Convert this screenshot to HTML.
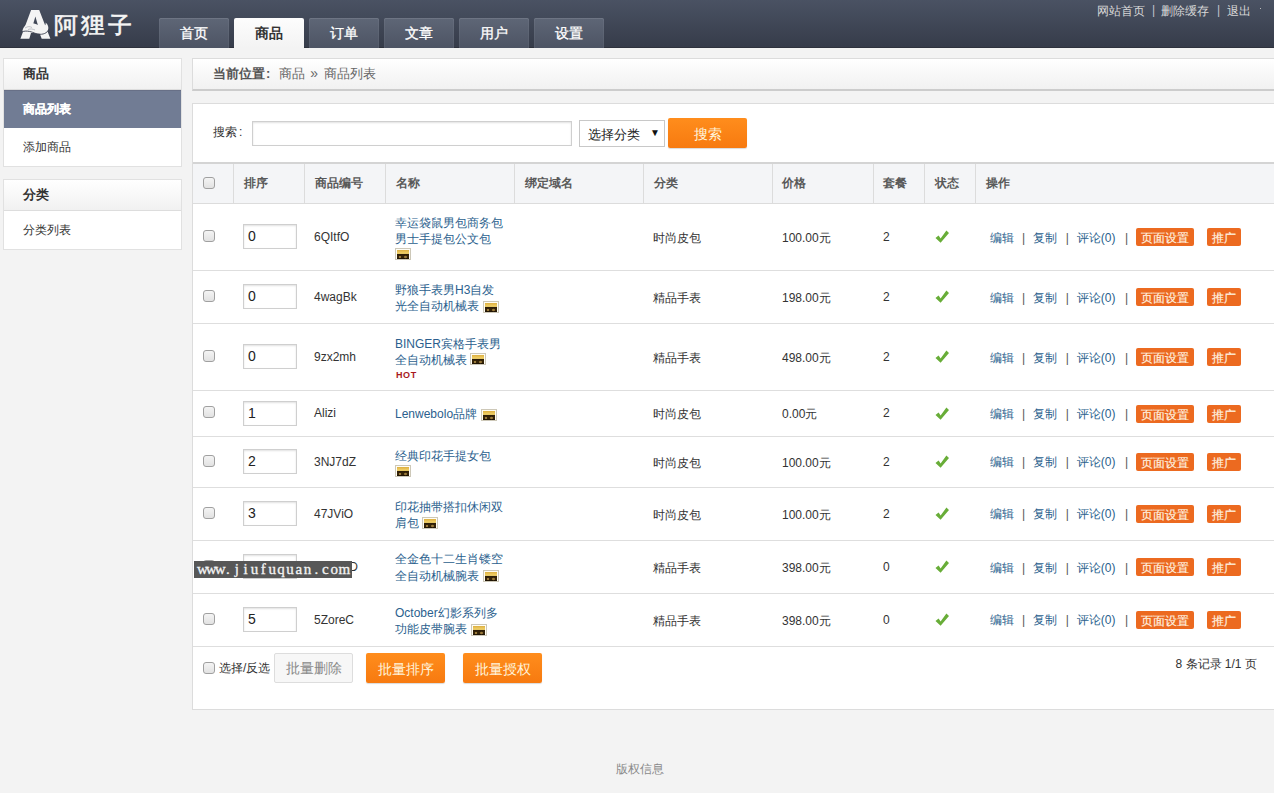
<!DOCTYPE html>
<html><head><meta charset="utf-8"><style>
*{box-sizing:border-box}
html,body{margin:0;padding:0}
body{width:1274px;height:793px;overflow:hidden;position:relative;background:#f3f3f3;font-family:"Liberation Sans",sans-serif;font-size:12px;color:#333}
.a{position:absolute;white-space:nowrap}
#hd{left:0;top:0;width:1274px;height:48px;background:linear-gradient(#4a5263,#363c4a);border-bottom:1px solid #2e323d}
.tab{position:absolute;top:18px;width:70px;height:30px;background:linear-gradient(#5e6676,#4d5464);color:#fff;font-size:14px;text-align:center;line-height:31px;-webkit-text-stroke:0.3px #fff;border-radius:2px 2px 0 0;box-shadow:inset 0 1px 0 rgba(255,255,255,.10),inset 1px 0 0 rgba(255,255,255,.05),inset -1px 0 0 rgba(255,255,255,.05)}
.tab.on{background:linear-gradient(#fdfdfd,#f3f3f3);color:#333;-webkit-text-stroke:0;font-weight:bold;height:30px;box-shadow:none}
.toplink{top:3px;color:#d8d8d8;font-size:12px;line-height:16px}
.side{position:absolute;left:3px;width:179px;background:#fff;border:1px solid #e1e1e1}
.side .h{height:31px;line-height:30px;padding-left:19px;font-weight:bold;font-size:13px;color:#333;background:linear-gradient(#fff,#f1f1f1);border-bottom:1px solid #ddd}
.side .i{height:38px;line-height:38px;padding-left:19px;font-size:12px;color:#333}
.side .i.on{background:#717c94;color:#fff;font-weight:bold;-webkit-text-stroke:0.2px #fff;box-shadow:inset 0 1px 0 #687087}
#crumb{left:192px;top:58px;width:1090px;height:33px;background:linear-gradient(#fff,#f1f1f1);border:1px solid #dcdcdc;border-bottom:2px solid #cccccc;font-size:13px;line-height:29px;padding-left:20px;color:#666}
#crumb b{color:#555}
#main{left:192px;top:103px;width:1090px;height:607px;background:#fff;border:1px solid #dcdcdc}
.inp{position:absolute;background:#fff;border:1px solid #cfcfcf;box-shadow:inset 0 1px 2px rgba(0,0,0,.12)}
.obtn{position:absolute;background:linear-gradient(#ff8d1c,#f77a10);color:#fff4dc;border-radius:2px;text-align:center;font-size:14px;box-shadow:0 1px 1px rgba(0,0,0,.15);padding-top:1px}
.cb{position:absolute;width:12px;height:12px;border:1px solid #a0a0a0;border-radius:3px;background:linear-gradient(#f4f4f4,#e2e2e2)}
#th{left:193px;top:162px;width:1090px;height:42px;background:#f4f5f7;border-top:2px solid #d4d4d4;border-bottom:1px solid #dcdcdc}
.thc{position:absolute;top:0;height:39px;line-height:39px;font-weight:bold;font-size:12px;color:#595959}
.sep{position:absolute;top:0;width:1px;height:39px;background:#dcdcdc}
.rowline{position:absolute;left:193px;width:1090px;height:1px;background:#dedede}
.t{position:absolute;white-space:nowrap;font-size:12px;color:#333;line-height:16px}
.lk{color:#2f6496}
.nm{position:absolute;left:395px;font-size:12px;line-height:16px;color:#2b5f8e;white-space:nowrap}
.vip{position:absolute;width:16px;height:12px;border:1px solid #cdc8b8;background:#fffdf5}
.vip b{position:absolute;left:1px;top:1px;width:12px;height:9px;background:radial-gradient(circle at 3px 7px,#9a7a3a 0,#9a7a3a 1px,transparent 1.6px),radial-gradient(circle at 8.5px 7px,#9a7a3a 0,#9a7a3a 1px,transparent 1.6px),linear-gradient(#dcae40 0,#f4d46a 38%,#2c1c06 50%,#3a2708 80%,#160d02 100%)}
.hot{position:absolute;font-family:"Liberation Sans",sans-serif;font-weight:bold;font-size:9px;color:#a8191c;letter-spacing:0.6px;line-height:10px}
.ops{position:absolute;left:990px;font-size:12px;line-height:16px;color:#2b5f8e;white-space:nowrap}
.ops .p{color:#555;display:inline-block}
.rb{position:absolute;background:#ec6a20;color:#fff3e0;font-size:12px;text-align:center;line-height:20px;height:18px;border-radius:2px;-webkit-text-stroke:0.15px #fff3e0}
.chk{position:absolute;left:935px;width:14px;height:14px}
</style></head><body>
<div id="hd" class="a"></div>
<svg class="a" style="left:17px;top:6px" width="38" height="36" viewBox="0 0 38 36">
<path d="M14.1 3.9 L22.2 3.9 L33.4 32.7 L24.7 32.7 L22.5 27 L14 27 L12.3 32.7 L3.4 32.7 Z M18.4 10.4 L16 18.5 L21 19.5 Z" fill="#f4f4f4" fill-rule="evenodd"/>
<path d="M5.5 24.5 C7 19 12 16.5 17 17.5 C21 18.5 24 21 27 20 C28.5 19.5 29 18 28.5 16.5 C31 18 32 21.5 31 24 C29.5 27.5 24 28.5 19 27.5 C14 26.5 9 24 5.5 26 Z" fill="#f4f4f4"/>
<path d="M5 25.8 C10 24 15 26 19 27.6 C24 29.2 29 28 31.2 24.5" stroke="#3e4352" stroke-width="0.9" fill="none"/>
<path d="M8 22 C11 20 13 20.5 15 21.5 M11 23.5 C13.5 22.5 16 23 18 24" stroke="#9a9ea8" stroke-width="0.6" fill="none"/>
</svg>
<div class="a" style="left:54px;top:9px;font-size:23px;line-height:32px;color:#f5f5f5;-webkit-text-stroke:0.6px #f5f5f5;letter-spacing:3px;transform:scaleX(1.04);transform-origin:0 0">阿狸子</div>
<div class="tab" style="left:159px">首页</div>
<div class="tab on" style="left:234px">商品</div>
<div class="tab" style="left:309px">订单</div>
<div class="tab" style="left:384px">文章</div>
<div class="tab" style="left:459px">用户</div>
<div class="tab" style="left:534px">设置</div>
<div class="a toplink" style="left:1097px">网站首页</div>
<div class="a toplink" style="left:1152px;top:2px;color:#c0c4cc">|</div>
<div class="a toplink" style="left:1161px">删除缓存</div>
<div class="a toplink" style="left:1217px;top:2px;color:#c0c4cc">|</div>
<div class="a toplink" style="left:1227px">退出</div>
<div class="a" style="left:1260px;top:8px;width:1px;height:1px;background:#bbb"></div>
<div class="side" style="top:58px;height:109px"><div class="h">商品</div><div class="i on">商品列表</div><div class="i">添加商品</div></div>
<div class="side" style="top:179px;height:71px"><div class="h">分类</div><div class="i">分类列表</div></div>
<div id="crumb" class="a"><b>当前位置<span style="font-family:'Liberation Sans';margin:0 8.3px 0 1px">:</span></b>商品<span style="margin:0 6.4px 0 5.6px;font-size:14px">&raquo;</span>商品列表</div>
<div id="main" class="a"></div>
<div class="a" style="left:213px;top:124px;font-size:12px;line-height:16px;color:#333">搜索<span style="margin-left:2px">:</span></div>
<div class="inp" style="left:252px;top:121px;width:320px;height:25px"></div>
<div class="inp" style="left:579px;top:120px;width:86px;height:27px;box-shadow:none;border-color:#c8c8c8"></div>
<div class="a" style="left:588px;top:126px;font-size:13px;line-height:17px;color:#222">选择分类</div>
<div class="a" style="left:650px;top:126px;font-size:10px;line-height:14px;color:#111">▼</div>
<div class="obtn" style="left:668px;top:118px;width:79px;height:30px;line-height:30px">搜索</div>
<div id="th" class="a">
<div class="sep" style="left:40px"></div>
<div class="sep" style="left:111px"></div>
<div class="sep" style="left:192px"></div>
<div class="sep" style="left:321px"></div>
<div class="sep" style="left:450px"></div>
<div class="sep" style="left:579px"></div>
<div class="sep" style="left:680px"></div>
<div class="sep" style="left:731px"></div>
<div class="sep" style="left:782px"></div>
</div>
<div class="cb" style="left:203px;top:177px"></div>
<div class="thc a" style="left:244px;top:164px">排序</div>
<div class="thc a" style="left:315px;top:164px">商品编号</div>
<div class="thc a" style="left:396px;top:164px">名称</div>
<div class="thc a" style="left:525px;top:164px">绑定域名</div>
<div class="thc a" style="left:654px;top:164px">分类</div>
<div class="thc a" style="left:782px;top:164px">价格</div>
<div class="thc a" style="left:883px;top:164px">套餐</div>
<div class="thc a" style="left:935px;top:164px">状态</div>
<div class="thc a" style="left:986px;top:164px">操作</div>
<div class="rowline" style="top:270px"></div>
<div class="cb" style="left:203px;top:230px"></div>
<div class="inp" style="left:243px;top:224px;width:54px;height:25px;font-size:14px;line-height:23px;padding-left:4px;color:#222">0</div>
<div class="t" style="left:314px;top:229px">6QItfO</div>
<div class="nm" style="top:215px">幸运袋鼠男包商务包</div>
<div class="nm" style="top:231px">男士手提包公文包</div>
<i class="vip" style="left:395px;top:248px"><b></b></i>
<div class="t" style="left:653px;top:230px">时尚皮包</div>
<div class="t" style="left:782px;top:230px">100.00元</div>
<div class="t" style="left:883px;top:229px">2</div>
<svg class="chk" style="top:230px" viewBox="0 0 14 14"><path d="M0.5 8 L3.6 5.6 L5.6 8.6 L11.4 0.6 L14 3 L5.6 12.8 Z" fill="#68ad38"/></svg>
<div class="ops" style="top:230px">编辑<span class="p" style="margin:0 7.5px 0 8px">|</span>复制<span class="p" style="margin:0 8px 0 9px">|</span>评论(0)<span class="p" style="margin:0 0 0 9.5px">|</span></div>
<div class="rb" style="left:1136px;top:228px;width:58px">页面设置</div>
<div class="rb" style="left:1207px;top:228px;width:34px">推广</div>
<div class="rowline" style="top:323px"></div>
<div class="cb" style="left:203px;top:290px"></div>
<div class="inp" style="left:243px;top:284px;width:54px;height:25px;font-size:14px;line-height:23px;padding-left:4px;color:#222">0</div>
<div class="t" style="left:314px;top:289px">4wagBk</div>
<div class="nm" style="top:282px">野狼手表男H3自发</div>
<div class="nm" style="top:298px">光全自动机械表</div>
<i class="vip" style="left:483px;top:301px"><b></b></i>
<div class="t" style="left:653px;top:290px">精品手表</div>
<div class="t" style="left:782px;top:290px">198.00元</div>
<div class="t" style="left:883px;top:289px">2</div>
<svg class="chk" style="top:290px" viewBox="0 0 14 14"><path d="M0.5 8 L3.6 5.6 L5.6 8.6 L11.4 0.6 L14 3 L5.6 12.8 Z" fill="#68ad38"/></svg>
<div class="ops" style="top:290px">编辑<span class="p" style="margin:0 7.5px 0 8px">|</span>复制<span class="p" style="margin:0 8px 0 9px">|</span>评论(0)<span class="p" style="margin:0 0 0 9.5px">|</span></div>
<div class="rb" style="left:1136px;top:288px;width:58px">页面设置</div>
<div class="rb" style="left:1207px;top:288px;width:34px">推广</div>
<div class="rowline" style="top:390px"></div>
<div class="cb" style="left:203px;top:350px"></div>
<div class="inp" style="left:243px;top:344px;width:54px;height:25px;font-size:14px;line-height:23px;padding-left:4px;color:#222">0</div>
<div class="t" style="left:314px;top:349px">9zx2mh</div>
<div class="nm" style="top:335.5px">BINGER宾格手表男</div>
<div class="nm" style="top:351.5px">全自动机械表</div>
<i class="vip" style="left:470px;top:353px"><b></b></i>
<div class="hot" style="left:396px;top:370px">HOT</div>
<div class="t" style="left:653px;top:350px">精品手表</div>
<div class="t" style="left:782px;top:350px">498.00元</div>
<div class="t" style="left:883px;top:349px">2</div>
<svg class="chk" style="top:350px" viewBox="0 0 14 14"><path d="M0.5 8 L3.6 5.6 L5.6 8.6 L11.4 0.6 L14 3 L5.6 12.8 Z" fill="#68ad38"/></svg>
<div class="ops" style="top:350px">编辑<span class="p" style="margin:0 7.5px 0 8px">|</span>复制<span class="p" style="margin:0 8px 0 9px">|</span>评论(0)<span class="p" style="margin:0 0 0 9.5px">|</span></div>
<div class="rb" style="left:1136px;top:348px;width:58px">页面设置</div>
<div class="rb" style="left:1207px;top:348px;width:34px">推广</div>
<div class="rowline" style="top:436px"></div>
<div class="cb" style="left:203px;top:406px"></div>
<div class="inp" style="left:243px;top:401px;width:54px;height:25px;font-size:14px;line-height:23px;padding-left:4px;color:#222">1</div>
<div class="t" style="left:314px;top:405px">Alizi</div>
<div class="nm" style="top:406px">Lenwebolo品牌</div>
<i class="vip" style="left:481px;top:409px"><b></b></i>
<div class="t" style="left:653px;top:406px">时尚皮包</div>
<div class="t" style="left:782px;top:406px">0.00元</div>
<div class="t" style="left:883px;top:405px">2</div>
<svg class="chk" style="top:407px" viewBox="0 0 14 14"><path d="M0.5 8 L3.6 5.6 L5.6 8.6 L11.4 0.6 L14 3 L5.6 12.8 Z" fill="#68ad38"/></svg>
<div class="ops" style="top:406px">编辑<span class="p" style="margin:0 7.5px 0 8px">|</span>复制<span class="p" style="margin:0 8px 0 9px">|</span>评论(0)<span class="p" style="margin:0 0 0 9.5px">|</span></div>
<div class="rb" style="left:1136px;top:405px;width:58px">页面设置</div>
<div class="rb" style="left:1207px;top:405px;width:34px">推广</div>
<div class="rowline" style="top:487px"></div>
<div class="cb" style="left:203px;top:455px"></div>
<div class="inp" style="left:243px;top:449px;width:54px;height:25px;font-size:14px;line-height:23px;padding-left:4px;color:#222">2</div>
<div class="t" style="left:314px;top:454px">3NJ7dZ</div>
<div class="nm" style="top:448px">经典印花手提女包</div>
<i class="vip" style="left:395px;top:465px"><b></b></i>
<div class="t" style="left:653px;top:455px">时尚皮包</div>
<div class="t" style="left:782px;top:455px">100.00元</div>
<div class="t" style="left:883px;top:454px">2</div>
<svg class="chk" style="top:455px" viewBox="0 0 14 14"><path d="M0.5 8 L3.6 5.6 L5.6 8.6 L11.4 0.6 L14 3 L5.6 12.8 Z" fill="#68ad38"/></svg>
<div class="ops" style="top:454px">编辑<span class="p" style="margin:0 7.5px 0 8px">|</span>复制<span class="p" style="margin:0 8px 0 9px">|</span>评论(0)<span class="p" style="margin:0 0 0 9.5px">|</span></div>
<div class="rb" style="left:1136px;top:453px;width:58px">页面设置</div>
<div class="rb" style="left:1207px;top:453px;width:34px">推广</div>
<div class="rowline" style="top:540px"></div>
<div class="cb" style="left:203px;top:507px"></div>
<div class="inp" style="left:243px;top:501px;width:54px;height:25px;font-size:14px;line-height:23px;padding-left:4px;color:#222">3</div>
<div class="t" style="left:314px;top:506px">47JViO</div>
<div class="nm" style="top:499px">印花抽带搭扣休闲双</div>
<div class="nm" style="top:514.5px">肩包</div>
<i class="vip" style="left:422px;top:517px"><b></b></i>
<div class="t" style="left:653px;top:507px">时尚皮包</div>
<div class="t" style="left:782px;top:507px">100.00元</div>
<div class="t" style="left:883px;top:506px">2</div>
<svg class="chk" style="top:507px" viewBox="0 0 14 14"><path d="M0.5 8 L3.6 5.6 L5.6 8.6 L11.4 0.6 L14 3 L5.6 12.8 Z" fill="#68ad38"/></svg>
<div class="ops" style="top:506px">编辑<span class="p" style="margin:0 7.5px 0 8px">|</span>复制<span class="p" style="margin:0 8px 0 9px">|</span>评论(0)<span class="p" style="margin:0 0 0 9.5px">|</span></div>
<div class="rb" style="left:1136px;top:505px;width:58px">页面设置</div>
<div class="rb" style="left:1207px;top:505px;width:34px">推广</div>
<div class="rowline" style="top:593px"></div>
<div class="cb" style="left:203px;top:560px"></div>
<div class="inp" style="left:243px;top:554px;width:54px;height:25px;font-size:14px;line-height:23px;padding-left:4px;color:#222">4</div>
<div class="t" style="left:314px;top:559px">4Qx7uD</div>
<div class="nm" style="top:551px">全金色十二生肖镂空</div>
<div class="nm" style="top:567.5px">全自动机械腕表</div>
<i class="vip" style="left:483px;top:570px"><b></b></i>
<div class="t" style="left:653px;top:560px">精品手表</div>
<div class="t" style="left:782px;top:560px">398.00元</div>
<div class="t" style="left:883px;top:559px">0</div>
<svg class="chk" style="top:560px" viewBox="0 0 14 14"><path d="M0.5 8 L3.6 5.6 L5.6 8.6 L11.4 0.6 L14 3 L5.6 12.8 Z" fill="#68ad38"/></svg>
<div class="ops" style="top:560px">编辑<span class="p" style="margin:0 7.5px 0 8px">|</span>复制<span class="p" style="margin:0 8px 0 9px">|</span>评论(0)<span class="p" style="margin:0 0 0 9.5px">|</span></div>
<div class="rb" style="left:1136px;top:558px;width:58px">页面设置</div>
<div class="rb" style="left:1207px;top:558px;width:34px">推广</div>
<div class="rowline" style="top:646px"></div>
<div class="cb" style="left:203px;top:613px"></div>
<div class="inp" style="left:243px;top:607px;width:54px;height:25px;font-size:14px;line-height:23px;padding-left:4px;color:#222">5</div>
<div class="t" style="left:314px;top:612px">5ZoreC</div>
<div class="nm" style="top:605px">October幻影系列多</div>
<div class="nm" style="top:621px">功能皮带腕表</div>
<i class="vip" style="left:471px;top:624px"><b></b></i>
<div class="t" style="left:653px;top:613px">精品手表</div>
<div class="t" style="left:782px;top:613px">398.00元</div>
<div class="t" style="left:883px;top:612px">0</div>
<svg class="chk" style="top:613px" viewBox="0 0 14 14"><path d="M0.5 8 L3.6 5.6 L5.6 8.6 L11.4 0.6 L14 3 L5.6 12.8 Z" fill="#68ad38"/></svg>
<div class="ops" style="top:612px">编辑<span class="p" style="margin:0 7.5px 0 8px">|</span>复制<span class="p" style="margin:0 8px 0 9px">|</span>评论(0)<span class="p" style="margin:0 0 0 9.5px">|</span></div>
<div class="rb" style="left:1136px;top:611px;width:58px">页面设置</div>
<div class="rb" style="left:1207px;top:611px;width:34px">推广</div>
<div class="cb" style="left:203px;top:662px"></div>
<div class="a" style="left:219px;top:660px;font-size:12px;line-height:16px;color:#333">选择/反选</div>
<div class="a" style="left:274px;top:653px;width:79px;height:30px;background:#f7f7f7;border:1px solid #dddddd;border-radius:2px;color:#8a8a8a;font-size:14px;line-height:29px;text-align:center">批量删除</div>
<div class="obtn" style="left:366px;top:653px;width:79px;height:30px;line-height:30px">批量排序</div>
<div class="obtn" style="left:463px;top:653px;width:79px;height:30px;line-height:30px">批量授权</div>
<div class="a" style="left:1175.5px;top:656px;font-size:12px;line-height:16px;color:#333">8 条记录 1/1 页</div>
<div class="a" style="left:616px;top:761px;font-size:12px;line-height:16px;color:#8a8a8a">版权信息</div>
<div class="a" style="left:194px;top:561px;width:158px;height:17px;background:#575757"></div>
<div class="a" style="left:0;top:561px;color:#f4f4f4;font-family:'Liberation Serif',serif;font-size:15px;line-height:17px;-webkit-text-stroke:0.3px #f4f4f4"><span style="position:absolute;left:197.00px;width:8.85px;text-align:center">w</span><span style="position:absolute;left:205.85px;width:8.85px;text-align:center">w</span><span style="position:absolute;left:214.70px;width:8.85px;text-align:center">w</span><span style="position:absolute;left:223.55px;width:8.85px;text-align:center">.</span><span style="position:absolute;left:232.40px;width:8.85px;text-align:center">j</span><span style="position:absolute;left:241.25px;width:8.85px;text-align:center">i</span><span style="position:absolute;left:250.10px;width:8.85px;text-align:center">u</span><span style="position:absolute;left:258.95px;width:8.85px;text-align:center">f</span><span style="position:absolute;left:267.80px;width:8.85px;text-align:center">u</span><span style="position:absolute;left:276.65px;width:8.85px;text-align:center">q</span><span style="position:absolute;left:285.50px;width:8.85px;text-align:center">u</span><span style="position:absolute;left:294.35px;width:8.85px;text-align:center">a</span><span style="position:absolute;left:303.20px;width:8.85px;text-align:center">n</span><span style="position:absolute;left:312.05px;width:8.85px;text-align:center">.</span><span style="position:absolute;left:320.90px;width:8.85px;text-align:center">c</span><span style="position:absolute;left:329.75px;width:8.85px;text-align:center">o</span><span style="position:absolute;left:338.60px;width:8.85px;text-align:center">m</span></div>
</body></html>
